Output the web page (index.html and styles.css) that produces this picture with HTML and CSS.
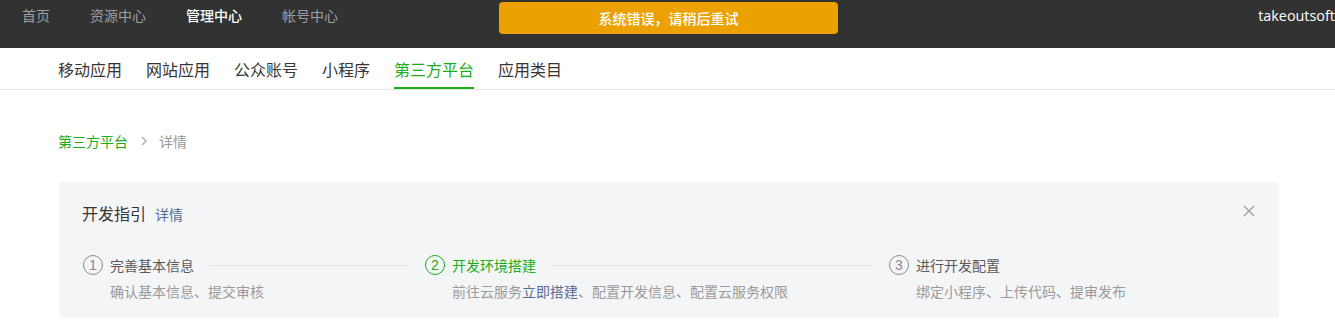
FILE: index.html
```html
<!DOCTYPE html>
<html lang="zh-CN">
<head>
  <meta charset="UTF-8">
  <title>第三方平台 - 详情</title>
  <link rel="stylesheet" href="styles.css">
</head>
<body>
  <div class="topbar">
    <div class="topnav">
      <a class="topnav-item">首页</a>
      <a class="topnav-item">资源中心</a>
      <a class="topnav-item active">管理中心</a>
      <a class="topnav-item">帐号中心</a>
    </div>
    <div class="user">takeoutsoft</div>
    <div class="toast">系统错误，请稍后重试</div>
  </div>

  <div class="subnav">
    <a class="subnav-item">移动应用</a>
    <a class="subnav-item">网站应用</a>
    <a class="subnav-item">公众账号</a>
    <a class="subnav-item">小程序</a>
    <a class="subnav-item active">第三方平台</a>
    <a class="subnav-item">应用类目</a>
  </div>

  <div class="page">
    <div class="breadcrumb">
      <a class="crumb-link">第三方平台</a>
      <svg class="crumb-arrow" width="6" height="10" viewBox="0 0 6 10"><path d="M1 1l4 4-4 4" fill="none" stroke="#a8a8a8" stroke-width="1.2"/></svg>
      <span class="crumb-current">详情</span>
    </div>

    <div class="guide">
      <div class="guide-head">
        <div class="guide-title">开发指引<a class="guide-more">详情</a></div>
        <svg class="guide-close" width="12" height="12" viewBox="0 0 12 12"><path d="M1 1l10 10M11 1L1 11" stroke="#9a9a9a" stroke-width="1.2"/></svg>
      </div>

      <div class="steps">
        <div class="step">
          <div class="step-head">
            <span class="step-num">1</span>
            <span class="step-title">完善基本信息</span>
            <span class="step-line"></span>
          </div>
          <div class="step-desc">确认基本信息、提交审核</div>
        </div>
        <div class="step current">
          <div class="step-head">
            <span class="step-num">2</span>
            <span class="step-title">开发环境搭建</span>
            <span class="step-line"></span>
          </div>
          <div class="step-desc">前往云服务<a class="step-link">立即搭建</a>、配置开发信息、配置云服务权限</div>
        </div>
        <div class="step">
          <div class="step-head">
            <span class="step-num">3</span>
            <span class="step-title">进行开发配置</span>
          </div>
          <div class="step-desc">绑定小程序、上传代码、提审发布</div>
        </div>
      </div>
    </div>
  </div>
</body>
</html>
```

FILE: styles.css
```css
body {
  margin: 0;
  font-family: "Noto Sans CJK SC", "Noto Sans", sans-serif;
  background: #fff;
  color: #353535;
  overflow: hidden;
}

a {
  cursor: pointer;
}

/* top dark bar */
.topbar {
  position: relative;
  display: flex;
  align-items: flex-start;
  height: 48px;
  background: #323232;
  overflow: hidden;
}

.topnav {
  display: flex;
  gap: 40px;
  padding-left: 22px;
}

.topnav-item {
  font-size: 14px;
  line-height: 30px;
  color: #9e9e9e;
}

.topnav-item.active {
  color: #fff;
  font-weight: 500;
}

.user {
  margin-left: auto;
  font-family: "Open Sans", "Liberation Sans", sans-serif;
  font-size: 14.4px;
  line-height: 32px;
  color: #fff;
  white-space: nowrap;
}

.toast {
  position: absolute;
  left: 499px;
  top: 2px;
  width: 339px;
  height: 32px;
  line-height: 32px;
  border-radius: 4px;
  background: #eba200;
  color: #fff;
  font-size: 14px;
  font-weight: 500;
  text-align: center;
}

/* second nav */
.subnav {
  display: flex;
  gap: 24px;
  padding-left: 58px;
  border-bottom: 1px solid #e5e5e5;
}

.subnav-item {
  box-sizing: border-box;
  height: 41px;
  padding-top: 3px;
  line-height: 36px;
  font-size: 16px;
  color: #353535;
  border-bottom: 2px solid transparent;
}

.subnav-item.active {
  color: #1aad19;
  border-bottom-color: #1aad19;
}

/* content */
.page {
  padding-left: 59px;
  width: 1220px;
}

.breadcrumb {
  display: flex;
  align-items: center;
  margin-top: 41px;
  margin-left: -1px;
  font-size: 14px;
  line-height: 20px;
}

.crumb-link {
  color: #1aad19;
}

.crumb-arrow {
  margin: 0 12px 0 13px;
}

.crumb-current {
  color: #999;
}

.guide {
  margin-top: 31px;
  padding: 19px 23px 17px 24px;
  background: #f4f5f7;
  border-radius: 4px;
}

.guide-head {
  display: flex;
  justify-content: space-between;
  align-items: flex-start;
}

.guide-title {
  margin-left: -1px;
  font-size: 16px;
  line-height: 24px;
  color: #353535;
}

.guide-more {
  margin-left: 9px;
  font-size: 14px;
  color: #576b95;
}

.guide-close {
  margin-top: 4px;
  margin-right: 1px;
}

.steps {
  display: grid;
  grid-template-columns: 342px 464px 1fr;
  margin-top: 29px;
}

.step-head {
  display: flex;
  align-items: center;
  height: 20px;
}

.step-num {
  box-sizing: border-box;
  width: 20px;
  height: 20px;
  margin-right: 7px;
  border: 1px solid #8a8a8a;
  border-radius: 50%;
  font-family: "Liberation Sans", sans-serif;
  font-size: 14px;
  line-height: 18px;
  text-align: center;
  color: #8a8a8a;
}

.step-title {
  font-size: 14px;
  color: #5a5a5a;
}

.step-line {
  flex: 1;
  height: 1px;
  margin: 0 16px;
  background: #e1e2e4;
}

.step.current .step-num {
  border-color: #1aad19;
  color: #1aad19;
}

.step.current .step-title {
  color: #1aad19;
}

.step-desc {
  margin-top: 6px;
  padding-left: 27px;
  font-size: 14px;
  line-height: 20px;
  color: #9a9a9a;
}

.step-link {
  color: #576b95;
}
```
